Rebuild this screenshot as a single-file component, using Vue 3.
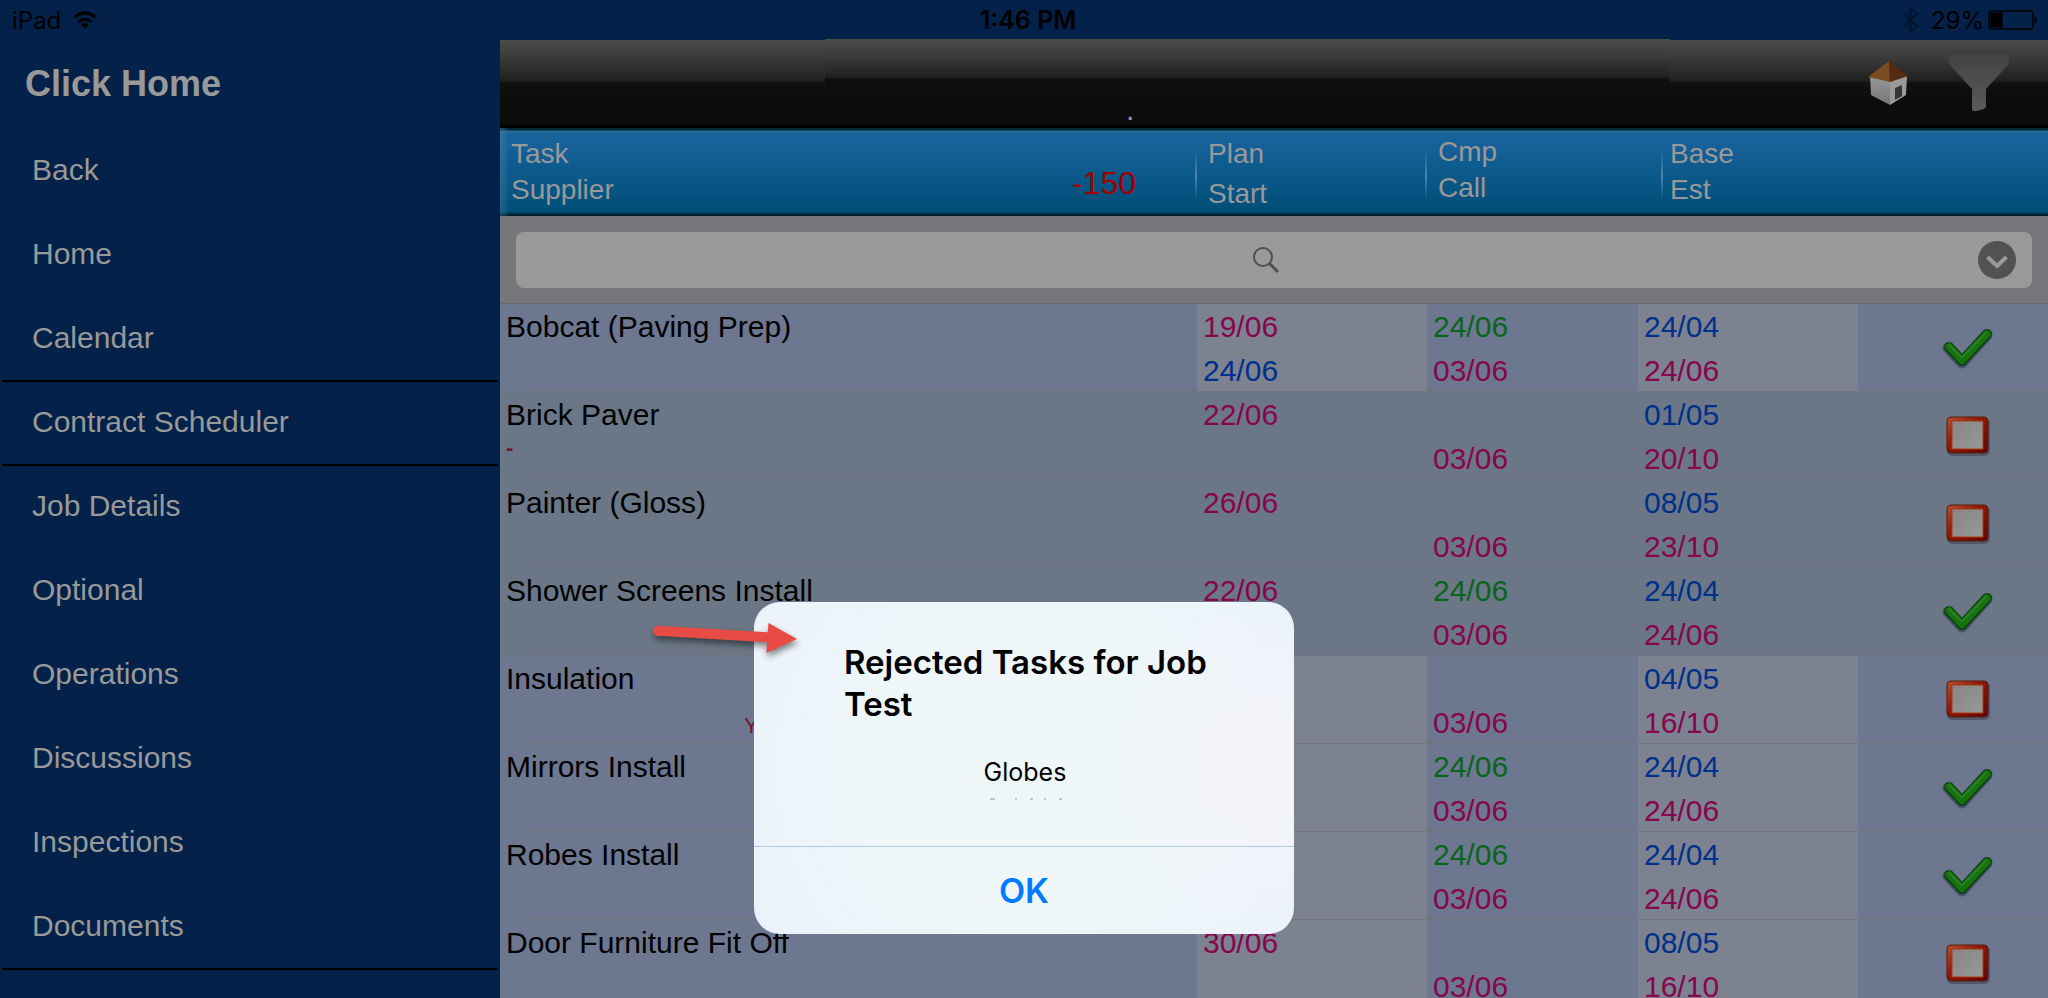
<script setup>
import { ref } from 'vue'

const menu = [
  { name: 'Back' },
  { name: 'Home' },
  { name: 'Calendar', line: true },
  { name: 'Contract Scheduler', line: true },
  { name: 'Job Details' },
  { name: 'Optional' },
  { name: 'Operations' },
  { name: 'Discussions' },
  { name: 'Inspections' },
  { name: 'Documents', line: true }
]

const search = ref('')

const tasks = ref([
  { name: 'Bobcat (Paving Prep)', plan: '19/06', start: '24/06', cmp: '24/06', call: '03/06', base: '24/04', est: '24/06', done: true },
  { name: 'Brick Paver', supplier: '-', plan: '22/06', call: '03/06', base: '01/05', est: '20/10', grey: true },
  { name: 'Painter (Gloss)', plan: '26/06', call: '03/06', base: '08/05', est: '23/10', grey: true },
  { name: 'Shower Screens Install', plan: '22/06', cmp: '24/06', call: '03/06', base: '24/04', est: '24/06', done: true, grey: true },
  { name: 'Insulation', supplier: 'Y', call: '03/06', base: '04/05', est: '16/10' },
  { name: 'Mirrors Install', cmp: '24/06', call: '03/06', base: '24/04', est: '24/06', done: true },
  { name: 'Robes Install', cmp: '24/06', call: '03/06', base: '24/04', est: '24/06', done: true },
  { name: 'Door Furniture Fit Off', plan: '30/06', call: '03/06', base: '08/05', est: '16/10' }
])
</script>

<template>
  <div class="screen">
    <header class="status">
      <div class="status-left">
        <span>iPad</span>
        <svg width="24" height="18" viewBox="0 0 24 18">
          <path d="M1.5 6.5a15 15 0 0 1 21 0" fill="none" stroke="#000" stroke-width="3.2" />
          <path d="M5.5 10.8a9.4 9.4 0 0 1 13 0" fill="none" stroke="#000" stroke-width="3" />
          <path d="M8 13.4a5.8 5.8 0 0 1 8 0L12 17.6z" />
        </svg>
      </div>
      <strong>1:46 PM</strong>
      <div class="status-right">
        <svg class="bluetooth" width="16" height="28" viewBox="0 0 16 28">
          <path d="M1 8l13 12-6.5 6V2L14 8 1 20" fill="none" stroke="#02142f" stroke-width="2" />
        </svg>
        <span>29%</span>
        <svg width="50" height="20" viewBox="0 0 50 20">
          <rect x="1" y="1" width="44" height="18" rx="3" fill="none" stroke="#000" stroke-width="1.4" />
          <rect x="2.5" y="2.5" width="12" height="15" />
          <path d="M46.500 6.500c3 0 3 7 0 7z" />
        </svg>
      </div>
    </header>

    <div class="body">
      <nav class="sidebar">
        <h1>Click Home</h1>
        <a v-for="item in menu" :key="item.name" href="#" :class="{ line: item.line }">{{ item.name }}</a>
      </nav>

      <main>
        <div class="toolbar">
          <div class="toolbar-title">.</div>
          <div class="toolbar-actions">
            <button aria-label="Home">
              <svg width="44" height="48" viewBox="0 0 44 48">
                <defs>
                  <linearGradient id="wall" x1="0" y1="0" x2="0" y2="1">
                    <stop offset="0" stop-color="#979797" />
                    <stop offset="1" stop-color="#777" />
                  </linearGradient>
                </defs>
                <path d="M3 17l20 5v24L4 36z" fill="url(#wall)" />
                <path d="M23 22l17-5-1 19-16 10z" fill="#999" />
                <path d="M28 29l7-3v11l-7 4z" fill="#343434" />
                <path d="M22 2L1 18l22 5z" fill="#7b4d24" />
                <path d="M22 2l19 15-18 6z" fill="#542b10" />
              </svg>
            </button>
            <button aria-label="Filter">
              <svg width="60" height="58" viewBox="0 0 60 58">
                <defs>
                  <linearGradient id="funnel" x1="0" y1="0" x2="0" y2="1">
                    <stop offset="0" stop-color="#424242" />
                    <stop offset="1" stop-color="#5b5b5b" />
                  </linearGradient>
                </defs>
                <path d="M0 0h60v8q0 2-2 4L37 35v17q0 2-2 3l-8 2q-4 1-4-3V35L2 12q-2-2-2-4z" fill="url(#funnel)" />
              </svg>
            </button>
          </div>
        </div>

        <table>
          <colgroup>
            <col />
            <col class="col-plan" />
            <col class="col-cmp" />
            <col class="col-base" />
            <col class="col-done" />
          </colgroup>
          <thead>
            <tr class="titles">
              <th>
                <div class="title title-task">
                  <span>Task<br />Supplier</span>
                  <span class="total">-150</span>
                </div>
              </th>
              <th><div class="title divider title-plan">Plan<br />Start</div></th>
              <th><div class="title divider title-cmp">Cmp<br />Call</div></th>
              <th class="base"><div class="title divider">Base<br />Est</div></th>
              <th></th>
            </tr>
            <tr>
              <td class="search" colspan="5">
                <div class="search-box">
                  <input v-model="search" type="search" aria-label="Search tasks" />
                  <svg class="glass" width="28" height="28" viewBox="0 0 28 28">
                    <circle cx="11" cy="11" r="9" fill="none" stroke="#4f4f50" stroke-width="2" />
                    <path d="M17.500 17.500l8.500 8.500" stroke="#4f4f50" stroke-width="3" />
                  </svg>
                  <button aria-label="Search options">
                    <svg width="38" height="38" viewBox="0 0 38 38">
                      <circle cx="19" cy="19" r="19" fill="#525253" />
                      <path d="M9.500 16l9.500 9 9.500-9" fill="none" stroke="#999" stroke-width="4" />
                    </svg>
                  </button>
                </div>
              </td>
            </tr>
          </thead>
          <tbody>
            <tr v-for="task in tasks" :key="task.name" :class="{ grey: task.grey }">
              <td class="task">
                <div>{{ task.name }}</div>
                <div class="supplier" :class="{ indented: task.supplier === 'Y' }">{{ task.supplier }}</div>
              </td>
              <td class="light">
                <div class="pink">{{ task.plan }}</div>
                <div class="blue">{{ task.start }}</div>
              </td>
              <td>
                <div class="green">{{ task.cmp }}</div>
                <div class="pink">{{ task.call }}</div>
              </td>
              <td class="light">
                <div class="blue">{{ task.base }}</div>
                <div class="pink">{{ task.est }}</div>
              </td>
              <td class="done">
                <label>
                  <input v-model="task.done" type="checkbox" :aria-label="task.name" />
                  <svg v-if="task.done" width="52" height="46" viewBox="0 0 52 46">
                    <path d="M6 23l14 15L45 10" fill="none" stroke="#26334a" stroke-width="11" stroke-linecap="round" stroke-linejoin="round" opacity=".55" />
                    <path d="M7 22l13 14L45 9" fill="none" stroke="#0b440c" stroke-width="10" stroke-linecap="round" stroke-linejoin="round" />
                    <path d="M7 21.500l13 14L45 9" fill="none" stroke="#187211" stroke-width="7" stroke-linecap="round" stroke-linejoin="round" />
                    <path d="M7 20l13 12.500L44 7.500" fill="none" stroke="#2b8023" stroke-width="2" stroke-linecap="round" stroke-linejoin="round" />
                  </svg>
                  <svg v-else width="46" height="40" viewBox="0 0 46 40">
                    <defs>
                      <linearGradient id="frame" x1="0" y1="0" x2="1" y2="1">
                        <stop offset="0" stop-color="#b5532b" />
                        <stop offset=".4" stop-color="#931b04" />
                        <stop offset="1" stop-color="#5f0400" />
                      </linearGradient>
                      <linearGradient id="pane" x1="0" y1="0" x2="1" y2="1">
                        <stop offset="0" stop-color="#858585" />
                        <stop offset="1" stop-color="#999" />
                      </linearGradient>
                    </defs>
                    <rect x="2" y="2" width="43" height="38" rx="5" fill="#3d4655" opacity=".6" />
                    <rect x="2" y="1" width="41" height="36" rx="4" fill="url(#frame)" stroke="#571c14" />
                    <rect x="7" y="5" width="31" height="28" fill="url(#pane)" stroke="#a93812" />
                  </svg>
                </label>
              </td>
            </tr>
          </tbody>
        </table>
      </main>
    </div>

    <div class="overlay">
      <div class="alert" role="alertdialog" aria-labelledby="alert-title">
        <div class="alert-body">
          <h2 id="alert-title">Rejected Tasks for Job<br />Test</h2>
          <p>Globes</p>
          <svg width="76" height="4" viewBox="0 0 76 4">
            <path d="M4 2h5M29 2h2M44 2h3M58 2h2M73 2h3" stroke="#8d9294" stroke-width="1" />
          </svg>
        </div>
        <button>OK</button>
        <svg class="arrow" width="160" height="50" viewBox="0 0 160 50">
          <path d="M8 9.700L117.700 16.300 118.500 7 147 23 116.500 37 117 26.300 7 19.700Q3 18.500 3 14.500T8 9.700z" fill="#e84b43" />
        </svg>
      </div>
    </div>
  </div>
</template>

<style>
body {
  margin: 0;
  background: #032149;
}
</style>

<style scoped>
.screen {
  position: relative;
  display: flex;
  flex-direction: column;
  height: 100vh;
  overflow: hidden;
  background: #032149;
  font-family: 'Liberation Sans', Arial, sans-serif;
}

button {
  display: flex;
  padding: 0;
  border: none;
  background: none;
  cursor: pointer;
}

.status {
  display: grid;
  grid-template-columns: 1fr auto 1fr;
  align-items: center;
  flex-shrink: 0;
  height: 40px;
  padding: 0 10px 0 12px;
  font-family: Inter, sans-serif;
  font-size: 24px;
}
.status strong {
  padding-left: 6px;
  font-size: 25px;
  font-weight: 600;
}
.status-left,
.status-right {
  display: flex;
  align-items: center;
  gap: 12px;
}
.status-right {
  justify-content: flex-end;
  gap: 4px;
}
.bluetooth {
  margin-right: 8px;
}

.body {
  display: flex;
  flex: 1;
  min-height: 0;
}

.sidebar {
  flex: 0 0 500px;
  box-sizing: border-box;
  padding: 0 2px;
}
.sidebar h1 {
  margin: 0;
  padding-left: 23px;
  font-size: 36px;
  line-height: 88px;
  height: 90px;
  color: #999;
}
.sidebar a {
  display: block;
  box-sizing: border-box;
  height: 84px;
  padding-left: 30px;
  border-bottom: 2px solid transparent;
  font-size: 30px;
  line-height: 80px;
  color: #999;
  text-decoration: none;
}
.sidebar a.line {
  border-color: #000;
}

main {
  flex: 1;
  min-width: 0;
}

.toolbar {
  display: grid;
  grid-template-columns: 325px 1fr 378px;
  height: 88px;
  background: linear-gradient(#4b4b4b, #3c3c3c 16px, #202020 41px, #111 43px, #0c0c0c 60px, #0c0c0c 84px, #000 86px);
}
.toolbar-title {
  grid-column: 2;
  margin-top: -1px;
  background: linear-gradient(#4b4b4b, #3c3c3c 16px, #202020 38px, #0f0f0f 40px, #0c0c0c 60px, #0c0c0c 85px, #000 87px);
  padding-left: 301px;
  font-size: 30px;
  line-height: 142px;
  height: 89px;
  overflow: hidden;
  color: #999;
}
.toolbar-actions {
  display: flex;
  align-items: center;
  justify-content: flex-end;
  gap: 38px;
  padding: 0 39px 2px 0;
}

table {
  width: 100%;
  border-spacing: 0;
  table-layout: fixed;
  font-size: 30px;
  line-height: 44px;
}
.col-plan {
  width: 230px;
}
.col-cmp {
  width: 211px;
}
.col-base {
  width: 220px;
}
.col-done {
  width: 190px;
}
th,
td {
  box-sizing: border-box;
  padding: 0;
  vertical-align: top;
}

.titles {
  height: 88px;
  background: linear-gradient(#05283b, #05283b 2px, #2d6c96 3px, #18629a 6px, #16619a 16px, #00507a 80px, #004c70 84px, #001c2a 87px);
}
.titles th {
  font-size: 28px;
  font-weight: normal;
  line-height: 36px;
  text-align: left;
  color: #999;
}
.title {
  box-sizing: border-box;
  height: 88px;
  padding: 8px 0 0 9px;
}
.title-task {
  display: flex;
  align-items: center;
  justify-content: space-between;
  padding: 0 61px 0 11px;
  background: linear-gradient(90deg, #5d92ac55, #5d92ac33 5px, transparent 9px);
}
.title-plan,
.title-cmp {
  margin-left: -2px;
  padding: 6px 0 0 13px;
}
.title-plan {
  line-height: 40px;
}
.divider {
  background: linear-gradient(#4b86ad00, #4b86ad, #4b86ad00) 0 22px / 2px 50px no-repeat;
}
.titles .base {
  padding-left: 23px;
}
.total {
  padding-top: 22px;
  font-size: 32px;
  color: #a00000;
}

.search {
  height: 88px;
  padding: 16px 16px 15px 16px;
  border-bottom: 1px solid #68686c;
  background: #77777b;
}
.search-box {
  position: relative;
  display: flex;
  align-items: center;
  height: 56px;
  border-radius: 8px;
  background: #999;
}
.search-box input {
  flex: 1;
  height: 56px;
  padding: 0 20px;
  border: none;
  outline: none;
  background: none;
  font: inherit;
}
.search-box button {
  margin-right: 16px;
}
.glass {
  position: absolute;
  left: calc(50% - 22px);
  top: 14px;
}

tbody td {
  height: 88px;
  padding: 1px 0 0 6px;
  border-bottom: 1px solid #74757c;
  background: #6d7790;
}
tbody .task {
  border-bottom: none;
  background: linear-gradient(#74757c, #74757c) 30px 100% / 100% 1px no-repeat #6d7790;
}
tbody .light {
  background: #7d8291;
}
tbody .grey td {
  background-color: #6b7786;
}
tbody td div {
  height: 44px;
}
tbody td div + div {
  height: 42px;
}
.supplier {
  font-size: 22px;
  font-weight: bold;
  color: #7a1230;
}
tbody .supplier {
  line-height: 22px;
}
tbody .supplier.indented {
  padding-left: 238px;
  font-weight: normal;
  line-height: 50px;
}
.pink {
  color: #85064f;
}
.blue {
  color: #003089;
}
.green {
  color: #0a641c;
}

tbody .done {
  padding: 0 0 0 30px;
}
.done label {
  display: flex;
  align-items: center;
  justify-content: center;
  height: 87px;
}
.done input {
  position: absolute;
  opacity: 0;
}

.overlay {
  position: absolute;
  inset: 0;
  display: flex;
  align-items: flex-start;
  justify-content: center;
  padding-top: 602px;
}
.alert {
  position: relative;
  width: 540px;
  border-radius: 26px;
  background:
    radial-gradient(circle at 95% 50%, #f6f4f9, #f6f4f900 160px),
    radial-gradient(circle at 50% 50%, #eef6f8 50%, #ebf2fb);
  font-family: Inter, sans-serif;
  color: #000;
}
.alert-body {
  display: flex;
  flex-direction: column;
  align-items: center;
  box-sizing: border-box;
  height: 244px;
  padding-top: 39px;
}
.alert h2 {
  width: 360px;
  margin: 0;
  font-size: 33px;
  font-weight: 600;
  line-height: 42px;
  white-space: nowrap;
}
.alert p {
  margin: 30px 0 0;
  padding-left: 2px;
  font-size: 25px;
  line-height: 34px;
}
.alert-body svg {
  margin-top: 8px;
}
.alert button {
  width: 100%;
  height: 88px;
  align-items: center;
  justify-content: center;
  border-top: 1px solid #b3cbe0;
  font-family: inherit;
  font-size: 34px;
  font-weight: 600;
  color: #007aff;
}
.arrow {
  position: absolute;
  left: -104px;
  top: 14px;
  filter: drop-shadow(1px 4px 3px #0007);
}
</style>
